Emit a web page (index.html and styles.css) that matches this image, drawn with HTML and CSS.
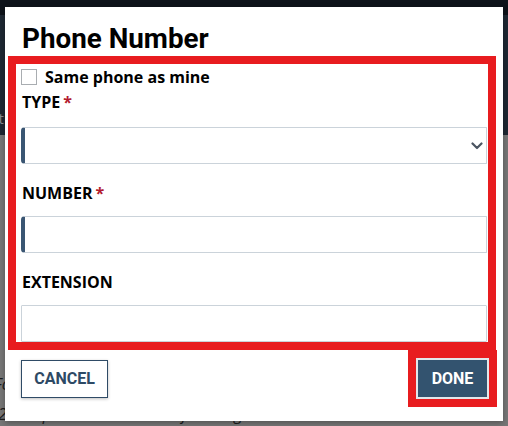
FILE: index.html
```html
<!DOCTYPE html>
<html lang="en">
<head>
<meta charset="utf-8">
<title>Phone Number</title>
<link rel="stylesheet" href="styles.css">
</head>
<body>
<div class="page">
  <div class="page-top"></div>
  <div class="page-nav"><span class="nav-text">Contact</span></div>
  <div class="page-content">
    <p class="line l1"><span class="link">Designate beneficiaries</span></p>
    <p class="line l2">For beneficiary information previously submitted electronic</p>
    <p class="line l3">2 and provided to the Thrift Savings Plan.</p>
  </div>
</div>

<div class="modal">
  <h1 class="modal-title">Phone Number</h1>
  <div class="modal-body">
    <label class="check-row">
      <span class="checkbox"></span>
      <span class="check-text">Same phone as mine</span>
    </label>
    <div class="field">
      <div class="label">TYPE<span class="req">*</span></div>
      <div class="control required select">
        <svg class="chevron" width="12" height="8" viewBox="0 0 12 8"><path d="M1.5 1.5 L6 6 L10.5 1.5" fill="none" stroke="#4b5562" stroke-width="2.2" stroke-linecap="round" stroke-linejoin="round"/></svg>
      </div>
    </div>
    <div class="field">
      <div class="label">NUMBER<span class="req">*</span></div>
      <div class="control required"></div>
    </div>
    <div class="field">
      <div class="label">EXTENSION</div>
      <div class="control"></div>
    </div>
  </div>
  <div class="modal-footer">
    <button class="btn btn-cancel">CANCEL</button>
    <button class="btn btn-done">DONE</button>
  </div>
</div>

<div class="annot annot-body"></div>
<div class="annot annot-done"></div>
</body>
</html>
```

FILE: styles.css
```css
html, body {
  margin: 0;
  padding: 0;
}
body {
  width: 508px;
  height: 426px;
  overflow: hidden;
  position: relative;
  font-family: "Open Sans", "Noto Sans", sans-serif;
  background: #777777;
}
.page {
  display: flex;
  flex-direction: column;
  height: 426px;
}
.page-top {
  height: 20px;
  background: #0e131a;
}
.page-nav {
  height: 128px;
  background: #1e2833;
  box-sizing: border-box;
  padding-top: 92px;
}
.nav-text {
  color: #8a8f95;
  font-size: 15px;
  margin-left: -50px;
}
.page-content {
  flex: 1;
  background: #777777;
  padding-top: 186px;
  color: #1b1b1b;
  font-style: italic;
  font-size: 16px;
}
.line {
  margin: 0;
  line-height: 24px;
  white-space: nowrap;
}
.l1 { margin-left: -170px; }
.link { text-decoration: underline; }
.l2 { margin-left: -6px; margin-top: 27px; }
.l3 { margin-left: -2px; margin-top: 6px; }

.modal {
  position: absolute;
  left: 5px;
  top: 7px;
  width: 498px;
  height: 414px;
  background: #ffffff;
  box-sizing: border-box;
  padding: 0 16px;
  display: flex;
  flex-direction: column;
  box-shadow: 0 2px 6px rgba(0,0,0,0.3);
}
.modal-title {
  margin: 15px 0 0 1px;
  font-family: Roboto, "Noto Sans", sans-serif;
  font-weight: 700;
  font-size: 27.8px;
  line-height: 33px;
  color: #000000;
}
.modal-body {
  display: flex;
  flex-direction: column;
  margin-top: 14px;
}
.check-row {
  display: flex;
  align-items: center;
  gap: 8px;
  height: 16px;
}
.checkbox {
  width: 14px;
  height: 14px;
  border: 1px solid #a9adb1;
  background: #fff;
}
.check-text {
  font-weight: 700;
  font-size: 16px;
  line-height: 22px;
  color: #000;
}
.field {
  display: flex;
  flex-direction: column;
}
.label {
  font-weight: 700;
  font-size: 16px;
  line-height: 22px;
  color: #000;
  margin-left: 1px;
  margin-top: 6px;
}
.field + .field .label {
  margin-top: 18px;
}
.req {
  color: #b31b2f;
  margin-left: 3px;
}
.control {
  margin-top: 14px;
  height: 37px;
  box-sizing: border-box;
  border: 1px solid #cbd3da;
  border-radius: 1px;
  position: relative;
  background: #fff;
}
.field + .field .control {
  margin-top: 12px;
}
.control.required {
  border-left: 4px solid #3a5673;
  border-radius: 4px 1px 1px 4px;
}
.chevron {
  position: absolute;
  right: 3px;
  top: 14px;
}
.modal-footer {
  margin-top: auto;
  margin-bottom: 22px;
  display: flex;
  justify-content: space-between;
  align-items: center;
}
.btn {
  font-family: Roboto, "Noto Sans", sans-serif;
  font-weight: 700;
  font-size: 16px;
  cursor: pointer;
}
.btn-cancel {
  width: 87px;
  height: 38px;
  background: #fff;
  color: #2e4a65;
  border: 1px solid #2f4b66;
  box-shadow: 0 1px 3px rgba(0,0,0,0.25);
  padding: 0;
}
.btn-done {
  width: 73px;
  height: 41px;
  margin-right: -2px;
  background: #33536f;
  color: #ffffff;
  border: 2px solid #e2e7eb;
  padding: 0;
}
.annot {
  position: absolute;
  border: 8px solid #e81c1f;
  box-sizing: border-box;
  pointer-events: none;
}
.annot-body {
  left: 8px;
  top: 56px;
  width: 488px;
  height: 294px;
}
.annot-done {
  left: 408px;
  top: 350px;
  width: 89px;
  height: 57px;
}
```
